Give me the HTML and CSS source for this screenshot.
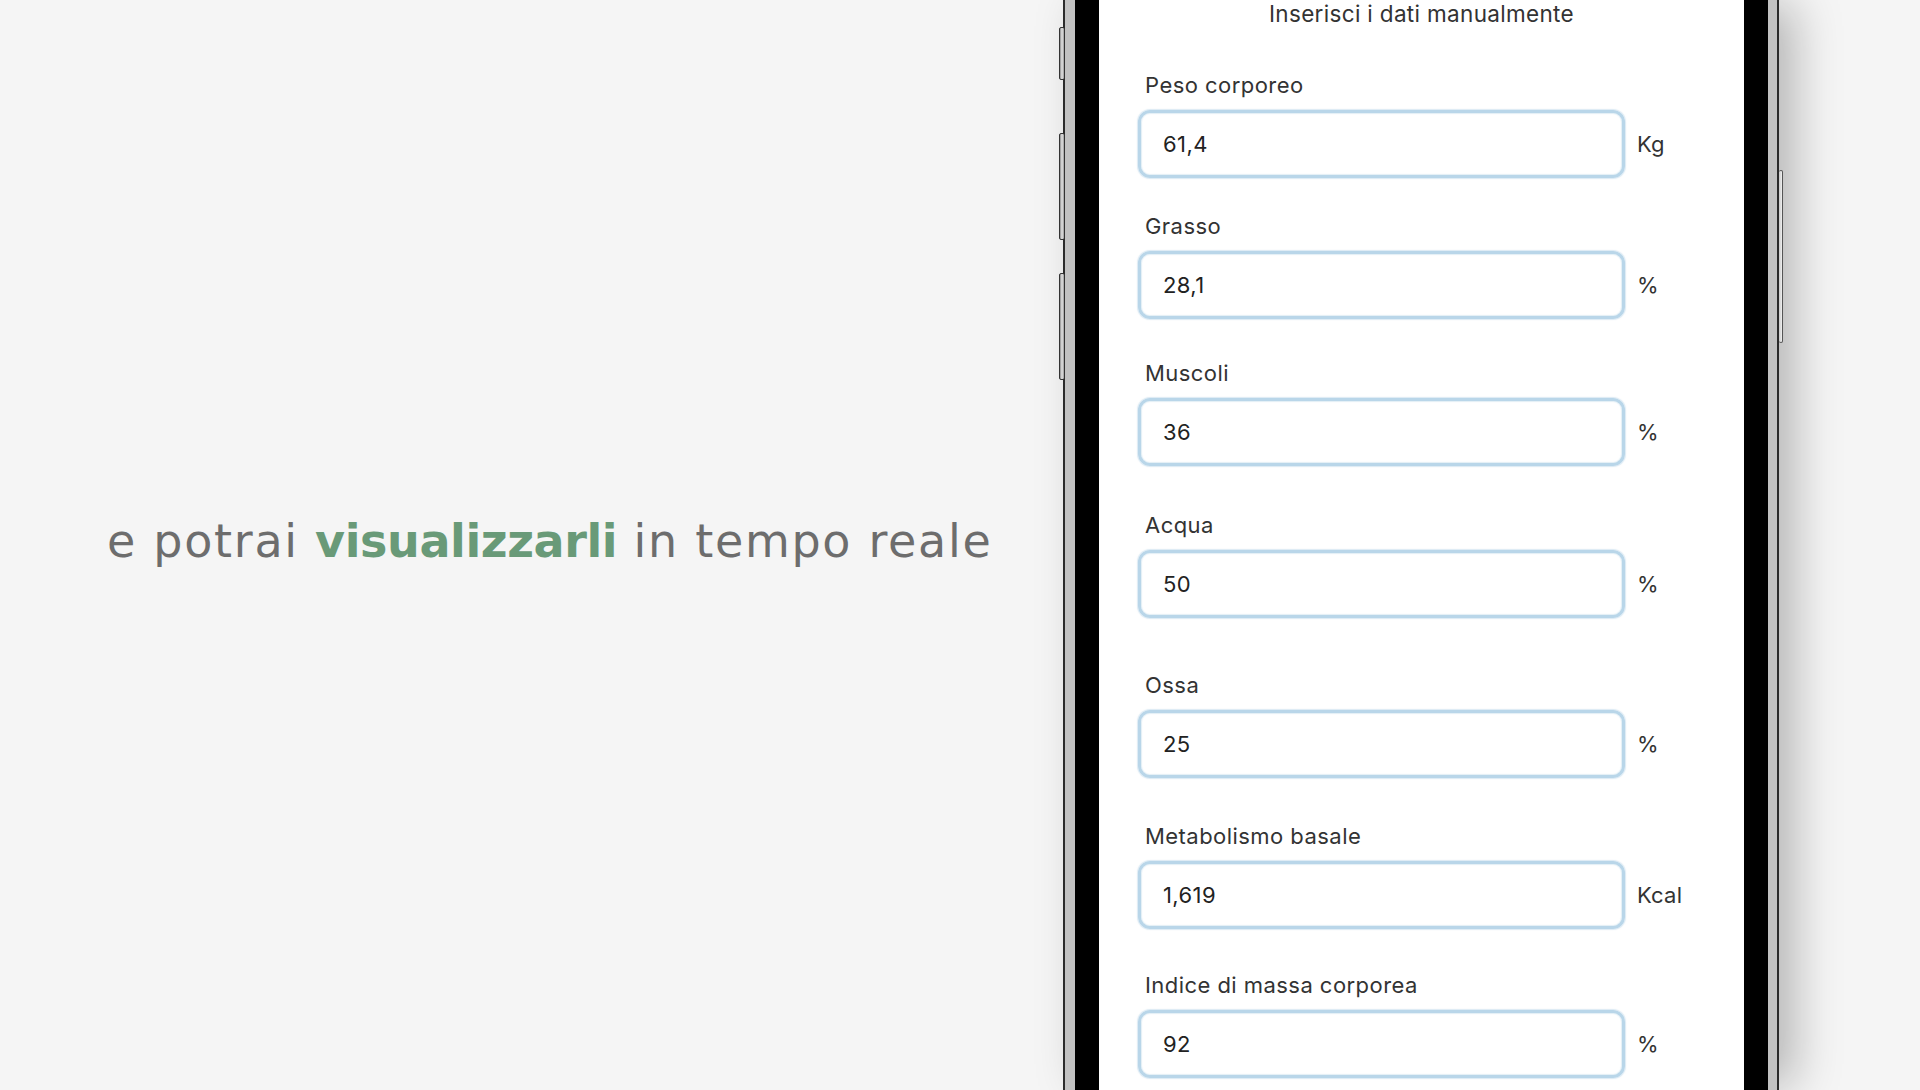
FILE: index.html
```html
<!DOCTYPE html>
<html lang="it">
<head>
<meta charset="utf-8">
<title>Inserisci i dati manualmente</title>
<link rel="stylesheet" href="styles.css">
</head>
<body>
<div class="stage">
  <section class="intro">
    <p class="headline">e potrai <strong>visualizzarli</strong> in tempo reale</p>
  </section>
  <div class="phone">
    <span class="btn btn-l1"></span>
    <span class="btn btn-l2"></span>
    <span class="btn btn-l3"></span>
    <span class="btn btn-r1"></span>
    <div class="frame">
      <div class="bezel">
        <div class="screen">
          <div class="title">Inserisci i dati manualmente</div>
          <div class="form">
            <div class="field">
              <div class="label">Peso corporeo</div>
              <div class="row"><div class="box">61,4</div><span class="unit">Kg</span></div>
            </div>
            <div class="field">
              <div class="label">Grasso</div>
              <div class="row"><div class="box">28,1</div><span class="unit">%</span></div>
            </div>
            <div class="field">
              <div class="label">Muscoli</div>
              <div class="row"><div class="box">36</div><span class="unit">%</span></div>
            </div>
            <div class="field">
              <div class="label">Acqua</div>
              <div class="row"><div class="box">50</div><span class="unit">%</span></div>
            </div>
            <div class="field">
              <div class="label">Ossa</div>
              <div class="row"><div class="box">25</div><span class="unit">%</span></div>
            </div>
            <div class="field">
              <div class="label">Metabolismo basale</div>
              <div class="row"><div class="box">1,619</div><span class="unit">Kcal</span></div>
            </div>
            <div class="field">
              <div class="label">Indice di massa corporea</div>
              <div class="row"><div class="box">92</div><span class="unit">%</span></div>
            </div>
          </div>
        </div>
      </div>
    </div>
  </div>
</div>
</body>
</html>
```

FILE: styles.css
```css
* { box-sizing: border-box; }
html, body {
  margin: 0;
  padding: 0;
  width: 1920px;
  height: 1090px;
  overflow: hidden;
  background: #f5f5f5;
}
.stage {
  display: flex;
  height: 1090px;
}
.intro {
  width: 1063px;
  flex: none;
  display: flex;
  align-items: center;
  padding-left: 107px;
  padding-bottom: 8px;
}
.headline {
  margin: 0;
  font-family: "DejaVu Sans", "Liberation Sans", sans-serif;
  font-weight: 400;
  font-size: 46px;
  letter-spacing: 1.7px;
  color: #6d6d6d;
  white-space: nowrap;
}
.headline strong {
  font-weight: 700;
  letter-spacing: -0.4px;
  color: #699a78;
}
.phone {
  position: relative;
  flex: none;
  width: 716px;
  height: 1090px;
  border-left: 2px solid #2b2b2b;
  border-right: 2px solid #2b2b2b;
  box-shadow: 18px 0 45px -4px rgba(0, 0, 0, 0.28);
}
.frame {
  height: 100%;
  border-left: 10px solid #c2c2c2;
  border-right: 9px solid #c2c2c2;
  box-shadow: inset 5px 0 0 -4px #7a7a7a, inset -4px 0 0 -3px #7a7a7a;
}
.bezel {
  height: 100%;
  background: #000;
  padding: 0 24px;
}
.screen {
  height: 100%;
  background: #fff;
  font-family: "Inter", "Liberation Sans", sans-serif;
  color: #2f2f2f;
  overflow: hidden;
}
.btn {
  position: absolute;
  width: 6px;
  background: linear-gradient(to right, #8d8d8d, #e6e6e6 50%, #9a9a9a);
  border: 1px solid #333;
  border-radius: 2px;
}
.btn-l1 { left: -6px; top: 27px; height: 53px; }
.btn-l2 { left: -6px; top: 133px; height: 107px; }
.btn-l3 { left: -6px; top: 273px; height: 107px; }
.btn-r1 {
  right: -6px;
  top: 170px;
  height: 173px;
  width: 4px;
  background: linear-gradient(to right, #c8c8c8, #f0f0f0);
  border-color: #555;
  border-width: 1px 1px 1px 0;
}
.title {
  padding-top: 2px;
  text-align: center;
  font-size: 22.5px;
  letter-spacing: 0.33px;
  line-height: 24px;
  color: #333;
}
.form {
  padding-left: 39px;
}
.field:nth-child(1) { margin-top: 46px; }
.field:nth-child(2) { margin-top: 35px; }
.field:nth-child(3) { margin-top: 41px; }
.field:nth-child(4) { margin-top: 46px; }
.field:nth-child(5) { margin-top: 54px; }
.field:nth-child(6) { margin-top: 45px; }
.field:nth-child(7) { margin-top: 43px; }
.label {
  padding-left: 7px;
  font-size: 22px;
  letter-spacing: 0.45px;
  line-height: 26px;
  margin-bottom: 12px;
  color: #333;
}
.row {
  display: flex;
  align-items: center;
  gap: 12px;
}
.box {
  width: 487px;
  height: 68px;
  border: 3px solid #b9d6e9;
  border-radius: 12px;
  box-shadow: 0 0 1px 1px rgba(185, 214, 233, 0.5), inset 0 0 1px 1px rgba(185, 214, 233, 0.4);
  padding-left: 22px;
  display: flex;
  align-items: center;
  font-size: 22px;
  letter-spacing: 0.4px;
  color: #222;
}
.unit {
  font-size: 22px;
  letter-spacing: 0.2px;
  color: #333;
}
```
